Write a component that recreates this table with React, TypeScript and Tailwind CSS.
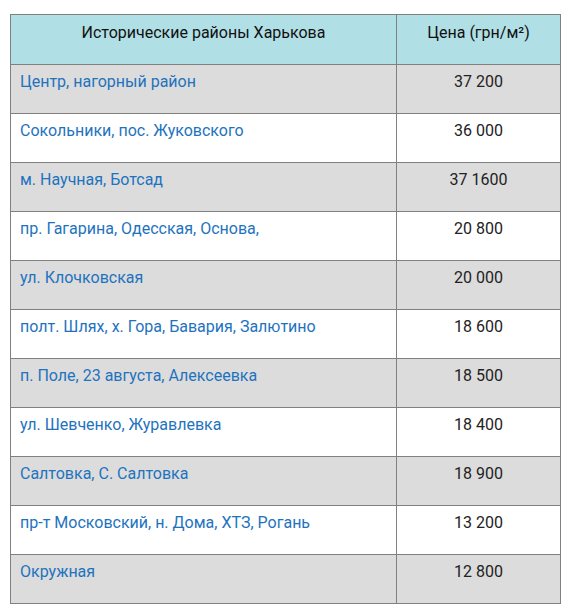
const rows: [string, string][] = [
  ["Центр, нагорный район", "37 200"],
  ["Сокольники, пос. Жуковского", "36 000"],
  ["м. Научная, Ботсад", "37 1600"],
  ["пр. Гагарина, Одесская, Основа,", "20 800"],
  ["ул. Клочковская", "20 000"],
  ["полт. Шлях, х. Гора, Бавария, Залютино", "18 600"],
  ["п. Поле, 23 августа, Алексеевка", "18 500"],
  ["ул. Шевченко, Журавлевка", "18 400"],
  ["Салтовка, С. Салтовка", "18 900"],
  ["пр-т Московский, н. Дома, ХТЗ, Рогань", "13 200"],
  ["Окружная", "12 800"],
];

export default function App() {
  return (
    <div className="bg-white pl-[10px] pt-[14px] font-['Roboto',sans-serif] text-[16px] leading-[24px]">
      <table className="w-[551px] border-collapse border border-[#2a2a2a]">
        <thead>
          <tr className="h-[50px] bg-[#b0dfe5]">
            <th className="w-[386px] border border-[#808080] pt-[6px] text-center align-top font-normal text-[#111]">
              Исторические районы Харькова
            </th>
            <th className="border border-[#808080] pt-[6px] text-center align-top font-normal text-[#111]">
              Цена (грн/м²)
            </th>
          </tr>
        </thead>
        <tbody>
          {rows.map(([name, price], i) => (
            <tr
              key={name}
              className={`h-[49px] ${i % 2 === 0 ? "bg-[#dcdcdc]" : "bg-white"}`}
            >
              <td className="border border-[#808080] pl-[9px] pt-[5px] align-top text-[#1e73be]">
                {name}
              </td>
              <td className="border border-[#808080] pt-[5px] text-center align-top text-[#222]">
                {price}
              </td>
            </tr>
          ))}
        </tbody>
      </table>
    </div>
  );
}
